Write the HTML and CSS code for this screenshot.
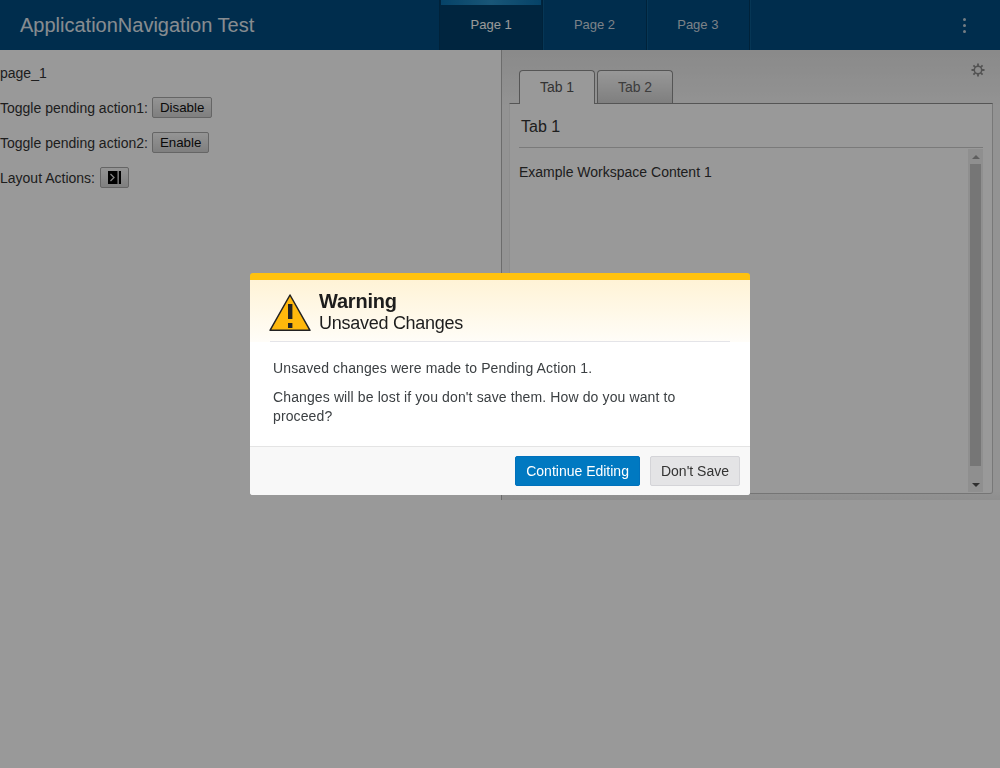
FILE: index.html
```html
<!DOCTYPE html>
<html lang="en">

<head>
    <meta charset="UTF-8">
    <meta name="viewport" content="width=device-width, initial-scale=1.0">
    <title>ApplicationNavigation Test</title>
    <link rel="stylesheet" href="styles.css">
</head>

<body>
    <header class="app-bar">
        <div class="app-title">ApplicationNavigation Test</div>
        <nav class="app-nav">
            <a class="nav-item nav-item-active">Page 1</a>
            <a class="nav-item">Page 2</a>
            <a class="nav-item">Page 3</a>
        </nav>
        <div class="app-menu">
            <span class="menu-dot"></span>
            <span class="menu-dot"></span>
            <span class="menu-dot"></span>
        </div>
    </header>

    <main class="layout">
        <section class="page-pane">
            <p class="pane-row pane-name">page_1</p>
            <p class="pane-row">Toggle pending action1: <button class="small-btn">Disable</button></p>
            <p class="pane-row">Toggle pending action2: <button class="small-btn">Enable</button></p>
            <p class="pane-row">Layout Actions: <button class="small-btn icon-btn">
                <svg width="13" height="13" viewBox="0 0 13 13">
                    <rect x="0" y="0" width="9.5" height="13" fill="#000"></rect>
                    <path d="M2.5 3 L6 6.5 L2.5 10" fill="none" stroke="#ddd" stroke-width="1.3"></path>
                    <rect x="10.8" y="0" width="2.2" height="13" fill="#000"></rect>
                </svg>
            </button></p>
        </section>

        <section class="workspace">
            <svg class="gear" width="14" height="14" viewBox="0 0 14 14">
                <circle cx="7" cy="7" r="3.7" fill="none" stroke="#8a8a8a" stroke-width="1.5"></circle>
                <path d="M7 0.5 V3 M7 11 V13.5 M0.5 7 H3 M11 7 H13.5 M2.4 2.4 L4.2 4.2 M9.8 9.8 L11.6 11.6 M2.4 11.6 L4.2 9.8 M9.8 4.2 L11.6 2.4" stroke="#8a8a8a" stroke-width="1.8"></path>
            </svg>
            <div class="tabs">
                <div class="tab tab-active">Tab 1</div>
                <div class="tab">Tab 2</div>
            </div>
            <div class="tab-panel">
                <h3 class="panel-title">Tab 1</h3>
                <div class="panel-body">
                    <div class="panel-text">Example Workspace Content 1</div>
                    <div class="scrollbar">
                        <span class="arrow arrow-up"></span>
                        <span class="thumb"></span>
                        <span class="arrow arrow-down"></span>
                    </div>
                </div>
            </div>
        </section>
    </main>

    <div class="backdrop"></div>

    <div class="dialog">
        <div class="dialog-head">
            <div class="dialog-head-inner">
                <svg class="warn-icon" width="43" height="38" viewBox="0 0 43 38">
                    <path d="M21 1 L41 36.3 H1 Z" fill="#ffb80c" stroke="#222" stroke-width="1.5" stroke-linejoin="round"></path>
                    <rect x="19" y="10" width="4.4" height="15" fill="#222"></rect>
                    <rect x="19" y="29" width="4.4" height="5" fill="#222"></rect>
                </svg>
                <div class="dialog-titles">
                    <div class="dialog-title">Warning</div>
                    <div class="dialog-subtitle">Unsaved Changes</div>
                </div>
            </div>
        </div>
        <div class="dialog-body">
            <p>Unsaved changes were made to Pending Action 1.</p>
            <p>Changes will be lost if you don't save them. How do you want to proceed?</p>
        </div>
        <div class="dialog-foot">
            <button class="btn btn-primary">Continue Editing</button>
            <button class="btn btn-default">Don't Save</button>
        </div>
    </div>
</body>

</html>
```

FILE: styles.css
```css
* {
    box-sizing: border-box;
}

html,
body {
    height: 100%;
}

body {
    margin: 0;
    background-color: #ffffff;
    color: #333333;
    font-family: "Liberation Sans", Arial, sans-serif;
    font-size: 14px;
    overflow: hidden;
}

.app-bar {
    display: flex;
    align-items: stretch;
    height: 50px;
    background-color: #004b80;
}

.app-title {
    width: 439px;
    padding-left: 20px;
    color: #e2eaf0;
    font-size: 20px;
    line-height: 50px;
}

.app-nav {
    display: flex;
    border-left: 1px solid #003a62;
}

.nav-item {
    position: relative;
    width: 103.33px;
    border-right: 1px solid #003a62;
    box-shadow: 1px 0 0 #0a5a8e;
    color: #ced9e1;
    font-size: 13px;
    line-height: 50px;
    text-align: center;
}

.nav-item-active {
    background-color: #003f69;
    color: #ffffff;
}

.nav-item-active::before {
    content: "";
    position: absolute;
    top: 0;
    left: 1px;
    right: 1px;
    height: 5px;
    background: linear-gradient(to right, #0a70ad, #2a90c8, #0a70ad);
}

.app-menu {
    display: flex;
    flex-direction: column;
    justify-content: center;
    gap: 3px;
    margin-left: auto;
    padding-right: 34px;
}

.menu-dot {
    width: 3px;
    height: 3px;
    border-radius: 50%;
    background-color: #c2d0da;
}

.layout {
    display: flex;
    height: 450px;
}

.page-pane {
    width: 501px;
    padding-top: 15px;
    color: #333333;
}

.pane-row {
    display: flex;
    align-items: center;
    gap: 4px;
    height: 21px;
    margin: 0 0 14px;
}

.pane-name {
    height: 16px;
    margin-bottom: 16px;
}

.small-btn {
    height: 21px;
    padding: 0 7px;
    border: 1px solid #a8a8a8;
    border-radius: 2px;
    background: linear-gradient(to bottom, #f8f8f8, #d4d4d4);
    color: #111111;
    font-family: "Liberation Sans", Arial, sans-serif;
    font-size: 13.33px;
}

.icon-btn {
    display: flex;
    align-items: center;
    width: 29px;
    margin-left: 1px;
    padding: 0 7px;
}

.workspace {
    position: relative;
    flex: 1;
    border-left: 1px solid #b5b5b5;
    padding: 20px 7px 0;
    background: linear-gradient(to bottom, #e6e6e6, #f6f6f6 60px, #f6f6f6 440px, #eeeeee);
}

.gear {
    position: absolute;
    top: 13px;
    right: 15px;
}

.tabs {
    display: flex;
    gap: 2px;
    height: 33px;
    padding-left: 10px;
}

.tab {
    position: relative;
    width: 76px;
    height: 33px;
    border: 1px solid #8e8e8e;
    border-bottom: 0;
    border-radius: 4px 4px 0 0;
    background: linear-gradient(to bottom, #fdfdfd, #d4d4d4);
    color: #666666;
    font-size: 14px;
    line-height: 33px;
    text-align: center;
}

.tab-active {
    height: 34px;
    background: #ffffff;
    color: #555555;
}

.tab-panel {
    height: 391px;
    padding: 0 9px;
    border: 1px solid #ececec;
    border-top: 1px solid #8e8e8e;
    border-bottom-color: #c4c4c4;
    border-right-color: #c8c8c8;
    border-radius: 0 0 3px 3px;
    background-color: #ffffff;
}

.panel-title {
    height: 44px;
    margin: 0;
    padding: 1px 0 0 2px;
    border-bottom: 1px solid #cccccc;
    color: #333333;
    font-size: 16px;
    font-weight: normal;
    line-height: 44px;
}

.panel-body {
    display: flex;
    justify-content: space-between;
    height: 345px;
}

.panel-text {
    padding-top: 16px;
    color: #333333;
}

.scrollbar {
    display: flex;
    flex-direction: column;
    align-items: center;
    width: 15px;
    height: 343px;
    margin-top: 1px;
    background-color: #efefef;
}

.thumb {
    width: 11px;
    height: 302px;
    background-color: #c5c5c5;
}

.arrow {
    width: 0;
    height: 0;
    border-left: 4px solid transparent;
    border-right: 4px solid transparent;
}

.arrow-up {
    margin: 6px 0 5px;
    border-bottom: 4px solid #9e9e9e;
}

.arrow-down {
    margin-top: 17px;
    border-top: 4px solid #505050;
}

.backdrop {
    position: fixed;
    top: 0;
    left: 0;
    right: 0;
    bottom: 0;
    background-color: rgba(0, 0, 0, .4);
}

.dialog {
    position: fixed;
    top: 273px;
    left: 250px;
    width: 500px;
    height: 222px;
    display: flex;
    flex-direction: column;
    border-top: 7px solid #ffc20e;
    border-radius: 3px;
    background-color: #ffffff;
    color: #333333;
}

.dialog-head {
    height: 62px;
    padding: 0 20px;
    background: linear-gradient(to bottom, #fff3d6, #fffdf8);
}

.dialog-head-inner {
    display: flex;
    height: 62px;
    border-bottom: 1px solid #e4e4e8;
}

.warn-icon {
    margin-top: 14px;
    margin-left: -1px;
}

.dialog-titles {
    margin-left: 7px;
    padding-top: 10px;
    color: #1d1d1d;
}

.dialog-title {
    font-size: 20px;
    font-weight: bold;
    letter-spacing: -.2px;
    line-height: 23px;
}

.dialog-subtitle {
    font-size: 18px;
    letter-spacing: -.27px;
    line-height: 21px;
}

.dialog-body {
    flex: 1;
    padding: 17px 23px 0;
    color: #3c4043;
    letter-spacing: .12px;
    line-height: 19px;
}

.dialog-body p {
    margin: 0 0 10px;
}

.dialog-foot {
    display: flex;
    justify-content: flex-end;
    gap: 10px;
    height: 49px;
    padding: 9px 10px;
    border-top: 1px solid #e4e4e4;
    border-radius: 0 0 3px 3px;
    background-color: #f8f8f8;
}

.btn {
    height: 30px;
    padding: 0 10px;
    border-radius: 2px;
    font-family: "Liberation Sans", Arial, sans-serif;
    font-size: 14px;
}

.btn-primary {
    border: 1px solid #0071bc;
    background-color: #0079c1;
    color: #ffffff;
}

.btn-default {
    border: 1px solid #d4d4d8;
    background-color: #e4e4e6;
    color: #333333;
}
```
